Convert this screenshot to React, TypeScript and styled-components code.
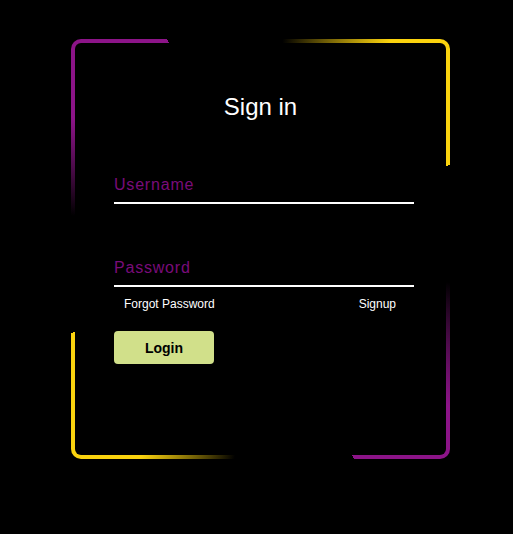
import React from "react";
import styled, { createGlobalStyle } from "styled-components";

const GlobalStyle = createGlobalStyle`
  html, body {
    margin: 0;
    padding: 0;
    background: #000;
    font-family: "Liberation Sans", Arial, sans-serif;
  }
  * { box-sizing: border-box; }
`;

const Page = styled.div`
  min-height: 534px;
  background: #000;
  padding: 39px 0 0 71px;
`;

const Frame = styled.div`
  width: 379px;
  height: 420px;
  display: flex;
  padding: 4px;
  border-radius: 10px;
  overflow: hidden;
  background: conic-gradient(
    from 0deg at 50% 50%,
    transparent 0deg 6deg,
    #fbd30e 32deg,
    #fbd30e 66deg,
    transparent 66deg 100deg,
    #8c1488 130deg,
    #8c1488 156deg,
    transparent 156deg 187deg,
    #fbd30e 210deg,
    #fbd30e 246deg,
    transparent 246deg 280deg,
    #8c1488 305deg,
    #8c1488 336deg,
    transparent 336deg
  );
`;

const Form = styled.form`
  flex: 1;
  background: #000;
  border-radius: 6px;
  padding: 50px 0 0;
  display: flex;
  flex-direction: column;
`;

const Title = styled.h2`
  margin: 0;
  color: #fff;
  font-size: 24px;
  line-height: 28px;
  font-weight: 400;
  text-align: center;
`;

const Fields = styled.div`
  width: 300px;
  margin-left: 39px;
  display: flex;
  flex-direction: column;
`;

const InputBox = styled.div<{ $top: number }>`
  margin-top: ${(p) => p.$top}px;
  display: flex;
  flex-direction: column;
`;

const Label = styled.span`
  color: #7a0c7a;
  font-size: 16px;
  line-height: 20px;
  letter-spacing: 0.05em;
  padding-bottom: 7px;
`;

const Line = styled.i`
  display: block;
  height: 2px;
  background: #fff;
`;

const Links = styled.div`
  margin-top: 10px;
  display: flex;
  justify-content: space-between;
  padding: 0 18px 0 10px;
`;

const LinkText = styled.a`
  color: #fff;
  font-size: 12px;
  line-height: 14px;
  text-decoration: none;
`;

const Button = styled.button`
  margin-top: 20px;
  width: 100px;
  height: 33px;
  border: none;
  border-radius: 4px;
  background: #d1e08a;
  color: #000;
  font-family: "Liberation Sans", Arial, sans-serif;
  font-size: 14px;
  font-weight: 700;
  padding: 0;
  cursor: pointer;
`;

export default function App() {
  return (
    <>
      <GlobalStyle />
      <Page>
        <Frame>
          <Form onSubmit={(e) => e.preventDefault()}>
            <Title>Sign in</Title>
            <Fields>
              <InputBox $top={54}>
                <Label>Username</Label>
                <Line />
              </InputBox>
              <InputBox $top={54}>
                <Label>Password</Label>
                <Line />
              </InputBox>
              <Links>
                <LinkText href="#">Forgot Password</LinkText>
                <LinkText href="#">Signup</LinkText>
              </Links>
              <div>
                <Button type="submit">Login</Button>
              </div>
            </Fields>
          </Form>
        </Frame>
      </Page>
    </>
  );
}
